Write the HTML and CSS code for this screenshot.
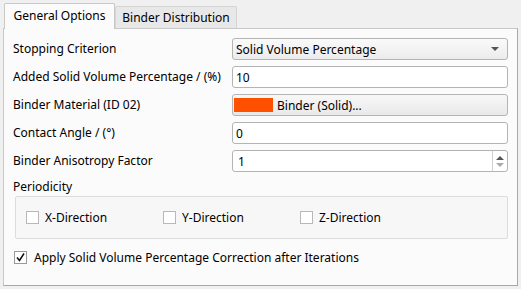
FILE: index.html
```html
<!DOCTYPE html>
<html>
<head>
<meta charset="utf-8">
<link rel="stylesheet" href="styles.css">
</head>
<body>
<div class="window">
  <div class="tabbar">
    <div class="tab active">General Options</div>
    <div class="tab">Binder Distribution</div>
  </div>
  <div class="panel">
    <div class="form">
      <div class="label">Stopping Criterion</div>
      <div class="combo"><span>Solid Volume Percentage</span><span class="arrow"></span></div>

      <div class="label">Added Solid Volume Percentage / (%)</div>
      <div class="input">10</div>

      <div class="label">Binder Material (ID 02)</div>
      <div class="button"><span class="swatch"></span><span>Binder (Solid)...</span></div>

      <div class="label">Contact Angle / (°)</div>
      <div class="input">0</div>

      <div class="label">Binder Anisotropy Factor</div>
      <div class="input spin"><span class="spin-text">1</span>
        <span class="spin-btns"><span class="up"></span><span class="down"></span></span>
      </div>
    </div>
    <div class="section-label">Periodicity</div>
    <div class="group">
      <label class="check"><span class="box"></span>X-Direction</label>
      <label class="check"><span class="box"></span>Y-Direction</label>
      <label class="check"><span class="box"></span>Z-Direction</label>
    </div>
    <label class="check apply"><span class="box checked">
      <svg width="11" height="11" viewBox="0 0 11 11"><path d="M2 5.5 L4.5 8.5 L9 1.5" fill="none" stroke="#111" stroke-width="1.6"/></svg>
    </span>Apply Solid Volume Percentage Correction after Iterations</label>
  </div>
</div>
</body>
</html>
```
FILE: styles.css
```css
html, body {
  margin: 0;
  padding: 0;
  background: #f0f0f0;
}
body {
  font-family: "Noto Sans", "DejaVu Sans", sans-serif;
  font-size: 12px;
  color: #000;
  width: 521px;
  height: 289px;
  overflow: hidden;
}
.window {
  padding-top: 3px;
}
.tabbar {
  display: flex;
  align-items: flex-end;
  padding-left: 4px;
  height: 25px;
  position: relative;
  z-index: 2;
}
.tab {
  box-sizing: border-box;
  height: 22px;
  padding: 0;
  border: 1px solid #d4d4d4;
  border-bottom: none;
  background: #e8e8e8;
  display: flex;
  align-items: center;
  border-radius: 2px 2px 0 0;
  width: 122px;
  justify-content: center;
  white-space: nowrap;
}
.tab.active {
  height: 26px;
  width: 111px;
  background: #fbfbfb;
  border-color: #c8c8c8;
  margin-bottom: -1px;
  padding-bottom: 2px;
}
.panel {
  box-sizing: border-box;
  margin-left: 3px;
  width: 515px;
  height: 258px;
  border: 1px solid #c8c8c8;
  border-right-color: #a8a8a8;
  border-bottom-color: #a8a8a8;
  background: #fbfbfb;
  padding: 9px 9px 0 9px;
  position: relative;
  z-index: 1;
}
.form {
  display: grid;
  grid-template-columns: 219px 1fr;
  row-gap: 6px;
  align-items: center;
}
.label {
  line-height: 22px;
  white-space: nowrap;
}
.combo, .input, .button {
  box-sizing: border-box;
  height: 22px;
  border: 1px solid #b4b4b4;
  border-radius: 3px;
  display: flex;
  align-items: center;
  padding-left: 3px;
}
.combo {
  background: linear-gradient(#fafafa, #ececec);
  justify-content: space-between;
  padding-right: 8px;
}
.arrow {
  width: 0;
  height: 0;
  border-left: 4px solid transparent;
  border-right: 4px solid transparent;
  border-top: 4px solid #555;
}
.input {
  background: #fff;
}
.button {
  background: linear-gradient(#f8f8f8, #e9e9e9);
  padding-left: 1px;
  gap: 4px;
}
.swatch {
  width: 39px;
  height: 14px;
  background: #ff5000;
}
.spin {
  padding-right: 0;
  justify-content: space-between;
  padding-left: 5px;
}
.spin-btns {
  width: 14px;
  height: 100%;
  border-left: 1px solid #d0d0d0;
  display: flex;
  flex-direction: column;
  align-items: center;
  justify-content: center;
  gap: 3px;
}
.up {
  width: 0; height: 0;
  border-left: 4px solid transparent;
  border-right: 4px solid transparent;
  border-bottom: 4px solid #555;
}
.down {
  width: 0; height: 0;
  border-left: 4px solid transparent;
  border-right: 4px solid transparent;
  border-top: 4px solid #aaa;
}
.section-label {
  margin-top: 7px;
  line-height: 16px;
}
.group {
  box-sizing: border-box;
  margin-top: 1px;
  margin-left: 2px;
  height: 43px;
  border: 1px solid #dcdcdc;
  border-radius: 2px;
  background: #f7f7f7;
  display: flex;
  align-items: center;
  padding-left: 10px;
}
.group .check {
  width: 137px;
}
.check {
  display: flex;
  align-items: center;
  gap: 6px;
  white-space: nowrap;
}
.box {
  box-sizing: border-box;
  width: 13px;
  height: 13px;
  border: 1px solid #b8b8b8;
  background: #fff;
  display: flex;
  align-items: center;
  justify-content: center;
}
.box.checked {
  border-color: #999;
}
.apply {
  margin-top: 10px;
  margin-left: 1px;
  gap: 7px;
}
```
